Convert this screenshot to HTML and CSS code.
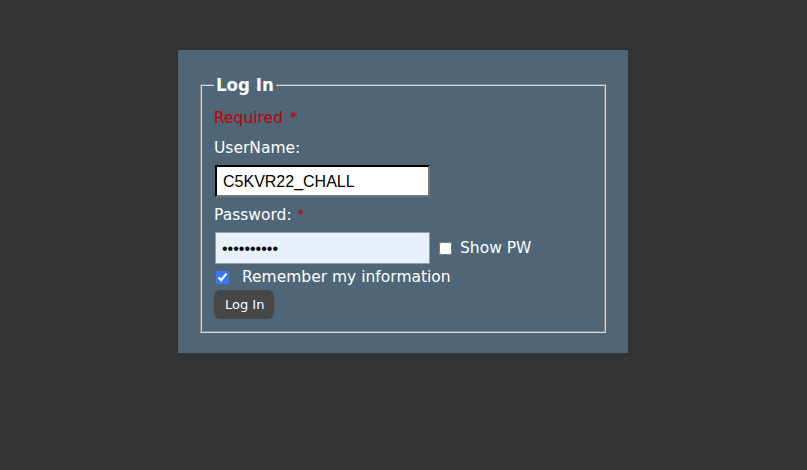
FILE: index.html
```html
<!DOCTYPE html>
<html>
<head>
<meta charset="utf-8">
<link rel="stylesheet" href="styles.css">
</head>
<body>
<div class="panel">
  <fieldset class="box">
    <legend class="title">Log In</legend>
    <div class="required">Required <span class="star">*</span></div>
    <label class="lbl" for="user">UserName:</label>
    <div class="row"><input id="user" class="field user" type="text" value="C5KVR22_CHALL"></div>
    <label class="lbl pw-lbl" for="pw">Password: <span class="star small">*</span></label>
    <div class="row pw-row">
      <input id="pw" class="field pw" type="password" value="abcdefghij">
      <label class="check show"><input type="checkbox" class="cb"> Show PW</label>
    </div>
    <label class="check remember"><input type="checkbox" class="cb" checked> <span class="rem-text">Remember my information</span></label>
    <div class="row"><button class="btn">Log In</button></div>
  </fieldset>
</div>
</body>
</html>
```

FILE: styles.css
```css
html, body {
  margin: 0;
  padding: 0;
  background: #333333;
  font-family: "DejaVu Sans", sans-serif;
}
.panel {
  width: 410px;
  margin: 50px 0 0 178px;
  padding: 24px 20px 20px;
  background: #4e6678;
  color: #ffffff;
}
.box {
  margin: 0 2px;
  padding: 0 12px 12px 12px;
  border: 2px groove #d8d8d8;
  display: flex;
  flex-direction: column;
  align-items: flex-start;
  font-size: 15.5px;
}
.title {
  font-family: "DejaVu Sans Condensed", "DejaVu Sans", sans-serif;
  font-weight: bold;
  font-size: 18.5px;
  padding: 0 2px;
  color: #ffffff;
  line-height: 22px;
}
.required {
  color: #c00000;
  margin-top: 12px;
  line-height: 20px;
}
.star { color: #c00000; margin-left: 2px; }
.small { font-size: 13px; vertical-align: 2px; margin-left: 1px; }
.lbl {
  display: block;
  margin-top: 10px;
  line-height: 20px;
}
.row {
  display: flex;
  align-items: center;
}
.field {
  box-sizing: border-box;
  width: 215px;
  height: 32px;
  margin: 0 0 0 1px;
  font-family: "Liberation Sans", Arial, sans-serif;
  font-size: 16px;
  padding: 2px 6px 0;
  color: #000;
}
.user {
  margin-top: 7px;
  border: 2px inset #767676;
  border-top-color: #222;
  border-left-color: #222;
  background: #ffffff;
}
.pw-lbl { margin-top: 7px; }
.pw-row { margin-top: 7px; }
.pw {
  border: 1px solid #9a9a9a;
  background: #e8f0fe;
}
.check {
  display: flex;
  align-items: center;
  line-height: 20px;
}
.show { margin-left: 6px; }
.cb {
  width: 13px;
  height: 13px;
  margin: 0 4px 0 3px;
  accent-color: #3b78f2;
}
.show .cb { margin: 0 8px 0 3px; }
.remember { margin-top: 3px; }
.remember .cb { margin: 0 8px 0 2px; }
.rem-text { margin-left: 5px; }
.btn {
  margin-top: 3px;
  background: #474747;
  color: #ffffff;
  border: none;
  border-radius: 6px;
  font-family: "DejaVu Sans", sans-serif;
  font-size: 13px;
  padding: 0 10px 0 11px;
  height: 29px;
}
```
